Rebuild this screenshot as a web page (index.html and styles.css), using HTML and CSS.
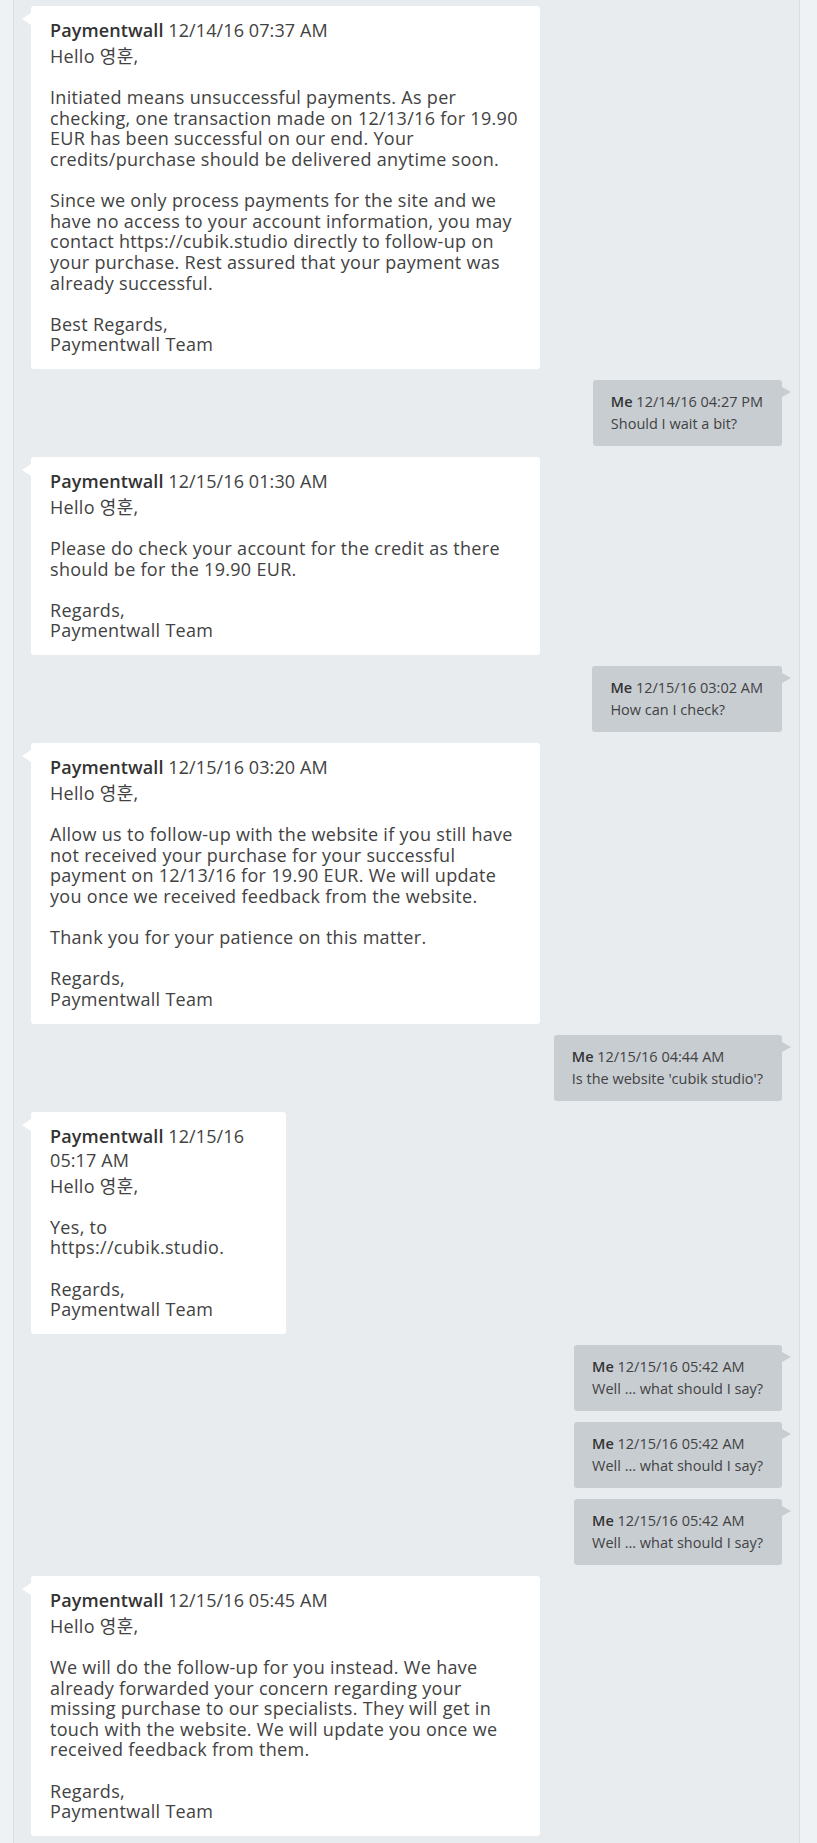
FILE: index.html
```html
<!DOCTYPE html>
<html>

<head>
    <title>
        Ticket conversation
    </title>
    <link rel="stylesheet" href="styles.css">
</head>

<body>
    <div class="thread">
        <div class="msg msg-in">
            <div class="msg-head"><span class="who">Paymentwall</span> 12/14/16 07:37 AM</div>
            <div class="msg-body">Hello 영훈,<br><br>Initiated means unsuccessful payments. As per checking, one transaction made on 12/13/16 for 19.90 EUR has been successful on our end. Your credits/purchase should be delivered anytime soon.<br><br>Since we only process payments for the site and we have no access to your account information, you may contact https://cubik.studio directly to follow-up on your purchase. Rest assured that your payment was already successful.<br><br>Best Regards,<br>Paymentwall Team</div>
        </div>

        <div class="msg msg-out">
            <div class="msg-head"><span class="who">Me</span> 12/14/16 04:27 PM</div>
            <div class="msg-body">Should I wait a bit?</div>
        </div>

        <div class="msg msg-in">
            <div class="msg-head"><span class="who">Paymentwall</span> 12/15/16 01:30 AM</div>
            <div class="msg-body">Hello 영훈,<br><br>Please do check your account for the credit as there should be for the 19.90 EUR.<br><br>Regards,<br>Paymentwall Team</div>
        </div>

        <div class="msg msg-out">
            <div class="msg-head"><span class="who">Me</span> 12/15/16 03:02 AM</div>
            <div class="msg-body">How can I check?</div>
        </div>

        <div class="msg msg-in">
            <div class="msg-head"><span class="who">Paymentwall</span> 12/15/16 03:20 AM</div>
            <div class="msg-body">Hello 영훈,<br><br>Allow us to follow-up with the website if you still have not received your purchase for your successful payment on 12/13/16 for 19.90 EUR. We will update you once we received feedback from the website.<br><br>Thank you for your patience on this matter.<br><br>Regards,<br>Paymentwall Team</div>
        </div>

        <div class="msg msg-out">
            <div class="msg-head"><span class="who">Me</span> 12/15/16 04:44 AM</div>
            <div class="msg-body">Is the website 'cubik studio'?</div>
        </div>

        <div class="msg msg-in msg-narrow">
            <div class="msg-head"><span class="who">Paymentwall</span> 12/15/16 05:17 AM</div>
            <div class="msg-body">Hello 영훈,<br><br>Yes, to https://cubik.studio.<br><br>Regards,<br>Paymentwall Team</div>
        </div>

        <div class="msg msg-out">
            <div class="msg-head"><span class="who">Me</span> 12/15/16 05:42 AM</div>
            <div class="msg-body">Well ... what should I say?</div>
        </div>

        <div class="msg msg-out">
            <div class="msg-head"><span class="who">Me</span> 12/15/16 05:42 AM</div>
            <div class="msg-body">Well ... what should I say?</div>
        </div>

        <div class="msg msg-out">
            <div class="msg-head"><span class="who">Me</span> 12/15/16 05:42 AM</div>
            <div class="msg-body">Well ... what should I say?</div>
        </div>

        <div class="msg msg-in">
            <div class="msg-head"><span class="who">Paymentwall</span> 12/15/16 05:45 AM</div>
            <div class="msg-body">Hello 영훈,<br><br>We will do the follow-up for you instead. We have already forwarded your concern regarding your missing purchase to our specialists. They will get in touch with the website. We will update you once we received feedback from them.<br><br>Regards,<br>Paymentwall Team</div>
        </div>
    </div>
</body>

</html>
```

FILE: styles.css
```css
body {
    margin: 0;
    background-color: #eff2f4;
    font-family: 'Open Sans', 'Noto Sans CJK KR', sans-serif;
    color: #424242;
}

.thread {
    margin-left: 13px;
    width: 787px;
    box-sizing: border-box;
    min-height: 1843px;
    padding: 6px 17px 7px 17px;
    background-color: #e8ecef;
    border-left: 1px solid #d8dfe3;
    border-right: 1px solid #d8dfe3;
    display: flex;
    flex-direction: column;
    align-items: flex-start;
    gap: 11px;
}

.msg {
    position: relative;
    box-sizing: border-box;
    border-radius: 3px;
}

.msg-in {
    width: 509px;
    background-color: white;
    padding: 12px 15px 14px 19px;
}

.msg-in .msg-head {
    font-size: 18px;
    line-height: 24px;
    letter-spacing: 0.1px;
    margin-bottom: 4px;
}

.msg-in .msg-body {
    font-size: 18px;
    line-height: 20.6px;
    letter-spacing: 0.3px;
}

.msg-narrow {
    width: 255px;
}

.msg-in::before {
    content: '';
    position: absolute;
    left: -9px;
    top: 7px;
    border-style: solid;
    border-width: 6.5px 9px 6.5px 0;
    border-color: transparent white transparent transparent;
}

.msg-out {
    align-self: flex-end;
    background-color: #c8cdd2;
    padding: 11px 19px 11px 18px;
    font-size: 14.5px;
    line-height: 22px;
}

.msg-out::after {
    content: '';
    position: absolute;
    right: -9px;
    top: 7px;
    border-style: solid;
    border-width: 5.5px 0 5.5px 9px;
    border-color: transparent transparent transparent #c8cdd2;
}

.who {
    font-weight: 600;
    color: #333;
}
```
